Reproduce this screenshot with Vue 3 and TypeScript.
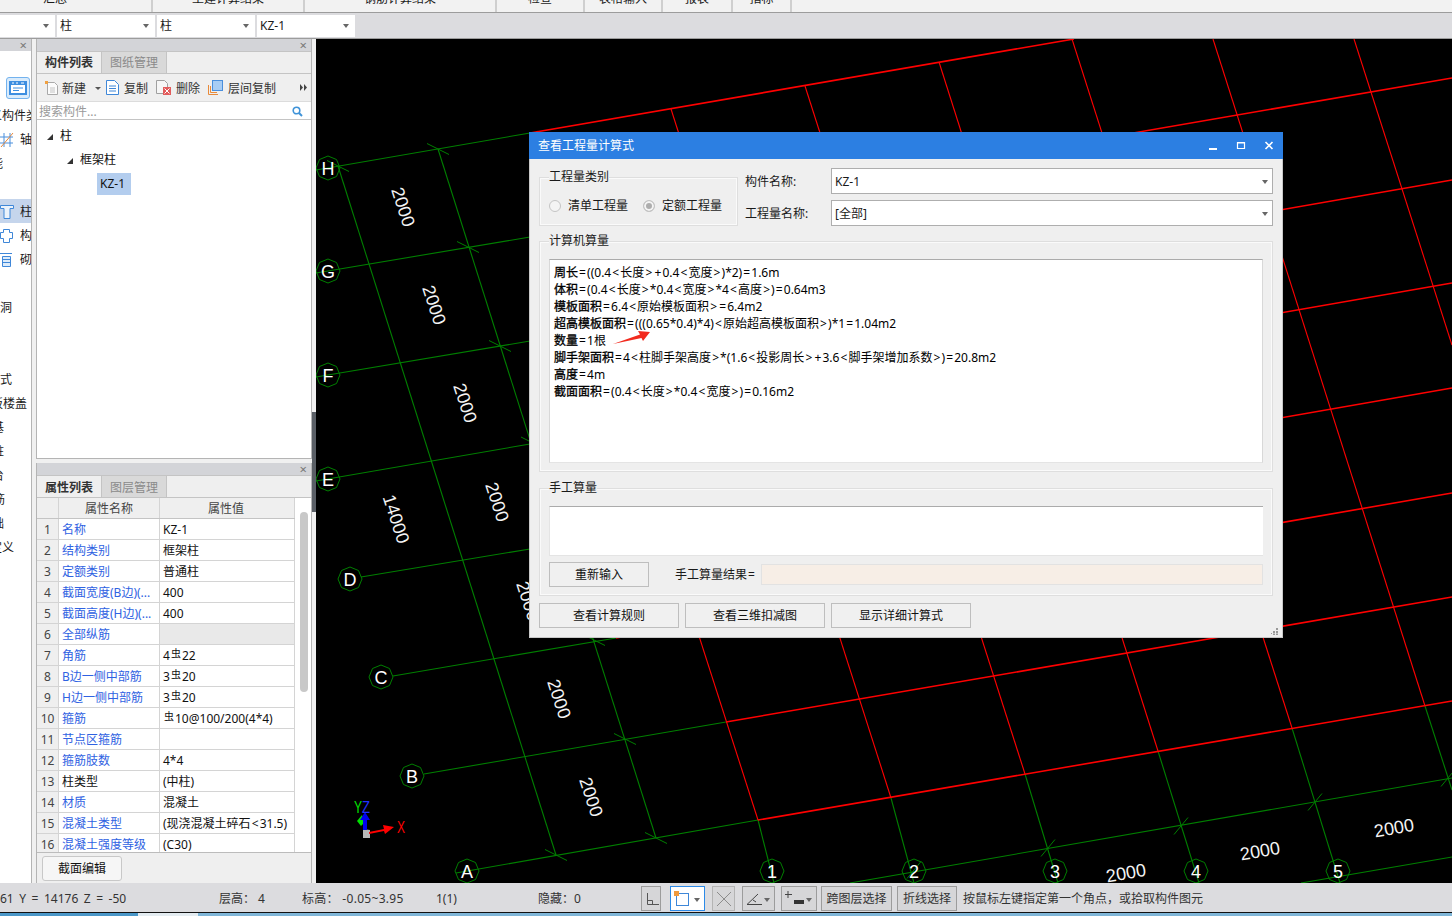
<template>
  <div class="app">
    <div class="menu">
      <div v-for="m in menuTabs" :key="m.label" class="menu__tab" :style="{ width: m.width + 'px' }">
        <span>{{ m.label }}</span>
      </div>
    </div>

    <div class="filters">
      <div class="select select--first"><i class="caret" /></div>
      <div v-for="(s, i) in filters" :key="i" class="select">{{ s }}<i class="caret" /></div>
    </div>

    <div class="main">
      <aside class="nav">
        <div class="nav__title"><span class="close">×</span></div>
        <div class="nav__tools">
          <span class="nav__view">
            <svg width="18" height="14" viewBox="0 0 18 14">
              <rect x="0" y="0" width="18" height="14" fill="#3d8ee0" />
              <rect x="2" y="4" width="14" height="8" fill="#fff" />
              <path d="M3 2h2M7 2h2M12 2h3" stroke="#fff" />
              <path d="M4 7h10M4 9.500h6" stroke="#3d8ee0" />
            </svg>
          </span>
        </div>
        <div
          v-for="(row, i) in navRows"
          :key="i"
          class="nav__row"
          :class="{ 'nav__row--on': row.active }"
        >
          <svg v-if="row.icon === 'grid'" class="nav__icon" width="14" height="16" viewBox="0 0 14 16">
            <path d="M0 5h13M0 11h13M4 1v14M10 1v14" stroke="#4a8fdc" fill="none" />
            <path d="M1 15 13 1" stroke="#e8883a" />
          </svg>
          <svg v-else-if="row.icon === 'col'" class="nav__icon" width="14" height="16" viewBox="0 0 14 16">
            <path d="M0.500 1.500h13v3h-3.500v10h-6v-10h-3.500z" stroke="#3f87d8" fill="#eaf2fb" />
          </svg>
          <svg v-else-if="row.icon === 'ring'" class="nav__icon" width="14" height="16" viewBox="0 0 14 16">
            <path d="M3.500 1.500h6v3h3v6h-3v4h-6v-4h-3v-6h3z" stroke="#3f87d8" fill="#fff" />
          </svg>
          <svg v-else-if="row.icon === 'wall'" class="nav__icon" width="14" height="16" viewBox="0 0 14 16">
            <path d="M0 1.500h12M2.500 4.500h8v10h-8zM2.500 7.500h8M2.500 10.500h8" stroke="#3f87d8" fill="#dcebfa" />
          </svg>
          <span class="nav__text" :style="{ marginLeft: row.offset + 'px' }">{{ row.text }}</span>
        </div>
      </aside>

      <div class="panels">
        <section class="panel panel--list">
          <div class="panel__title"><span class="close">×</span></div>
          <div class="tabs">
            <span class="tab tab--on">构件列表</span>
            <span class="tab">图纸管理</span>
          </div>
          <div class="tools">
            <span class="tool tool--new">
              <svg width="15" height="16" viewBox="0 0 15 16">
                <path d="M3.500 2.500h7l3 3v9h-10z" fill="#fbfbfb" stroke="#a9a9a9" />
                <path d="M6 8h5M6 10h5M6 12h5" stroke="#c4c4c4" />
                <path d="M1 1h3v3H1z" fill="#f0a040" />
              </svg>
              新建<i class="tool__caret" />
            </span>
            <span class="tool">
              <svg width="13" height="15" viewBox="0 0 13 15">
                <path d="M0.500 0.500h8l4 4v10h-12z" fill="#fff" stroke="#3f87d8" />
                <path d="M3 6h7M3 8.500h7M3 11h7" stroke="#3f87d8" />
              </svg>
              复制
            </span>
            <span class="tool">
              <svg width="15" height="15" viewBox="0 0 15 15">
                <path d="M0.500 0.500h8l3 3v10h-11z" fill="#f6f6f6" stroke="#a0a0a0" />
                <rect x="7" y="7" width="8" height="8" fill="#e25b5b" />
                <path d="M8.500 8.500l5 5M13.500 8.500l-5 5" stroke="#fff" />
              </svg>
              删除
            </span>
            <span class="tool">
              <svg width="15" height="15" viewBox="0 0 15 15">
                <path d="M0.500 5v9.500H10" fill="none" stroke="#e88a3a" />
                <path d="M2.500 6v6.500H9" fill="none" stroke="#e88a3a" />
                <rect x="4.500" y="0.500" width="10" height="10" fill="#a8cdf4" stroke="#4a8fdc" />
              </svg>
              层间复制
            </span>
            <svg class="tools__more" width="7" height="7" viewBox="0 0 7 7">
              <path d="M0 0l3 3.500L0 7zM4 0l3 3.500L4 7z" fill="#444" />
            </svg>
          </div>
          <div class="search">
            <span>搜索构件...</span>
            <svg width="11" height="11" viewBox="0 0 11 11">
              <circle cx="4.500" cy="4.500" r="3.300" fill="none" stroke="#3f93d8" stroke-width="1.600" />
              <path d="M7 7l3 3" stroke="#3f93d8" stroke-width="2" />
            </svg>
          </div>
          <div class="tree">
            <div class="tree__row"><i class="tree__arrow" />柱</div>
            <div class="tree__row tree__row--sub"><i class="tree__arrow" />框架柱</div>
            <div class="tree__row tree__row--leaf"><span class="tree__sel">KZ-1</span></div>
          </div>
        </section>

        <section class="panel panel--props">
          <div class="panel__title"><span class="close">×</span></div>
          <div class="tabs tabs--props">
            <span class="tab tab--on">属性列表</span>
            <span class="tab">图层管理</span>
          </div>
          <div class="props">
            <div class="props__scroll"><i /></div>
            <div class="props__table">
              <div class="prow prow--head">
                <span class="pnum" />
                <span class="pname">属性名称</span>
                <span class="pval">属性值</span>
              </div>
              <div v-for="(p, i) in props" :key="p.name" class="prow">
                <span class="pnum">{{ i + 1 }}</span>
                <span class="pname" :class="{ 'pname--plain': p.plain }">{{ p.name }}</span>
                <span class="pval" :class="{ 'pval--group': p.group }">
                  <span v-for="(t, j) in tokens(p.before)" :key="j" :class="{ op: isOp(t) }">{{ t }}</span><span v-if="p.steel" class="steel">虫</span>{{ p.after }}
                </span>
              </div>
            </div>
          </div>
          <div class="props__foot"><button class="edit-btn">截面编辑</button></div>
        </section>
      </div>

      <div class="splitter"><i /></div>

      <div class="canvas">
        <svg class="cad" width="1136" height="844" viewBox="316 39 1136 844">
          <line
            v-for="(l, i) in greenLines"
            :key="'g' + i"
            :x1="l[0]"
            :y1="l[1]"
            :x2="l[2]"
            :y2="l[3]"
            stroke="#007f00"
            stroke-width="1.100"
          />
          <line
            v-for="(l, i) in redAxes"
            :key="'ra' + i"
            :x1="l[0]"
            :y1="l[1]"
            :x2="l[2]"
            :y2="l[3]"
            stroke="#f00"
            stroke-width="1.100"
          />
          <line
            v-for="(l, i) in redBeams"
            :key="'rb' + i"
            :x1="l[0]"
            :y1="l[1]"
            :x2="l[2]"
            :y2="l[3]"
            stroke="#f00"
            stroke-width="1.600"
          />
          <line
            v-for="(t, i) in ticks"
            :key="'t' + i"
            :x1="t[0] - t[2]"
            :y1="t[1] - t[3]"
            :x2="t[0] + t[2]"
            :y2="t[1] + t[3]"
            stroke="#007f00"
          />
          <g v-for="b in bubbles" :key="b.label">
            <polygon :points="octagon(b.x, b.y)" fill="none" stroke="#007f00" />
            <text :x="b.x" :y="b.y + 6.500" class="cad__bubble" text-anchor="middle">{{ b.label }}</text>
          </g>
          <text
            v-for="(d, i) in dims"
            :key="'d' + i"
            class="cad__dim"
            text-anchor="middle"
            :transform="`translate(${d.x} ${d.y}) rotate(${d.r})`"
            y="6"
          >{{ d.text }}</text>

          <polygon points="363,829 370,830 370,838 363,838" fill="#b8b8b8" />
          <polygon points="357,821 362,815 365,822 361,826" fill="#00e000" />
          <path d="M369 832l15-3-1-4 11 2-9 7-1-3-15 3z" fill="#f00" />
          <path d="M363 830v-10h-3l5-8 5 8h-3v10z" fill="#0000f0" />
          <text x="354" y="813" class="cad__axis" fill="#00e000" textLength="8" lengthAdjust="spacingAndGlyphs">Y</text>
          <text x="362" y="813" class="cad__axis" fill="#2030ff" textLength="8" lengthAdjust="spacingAndGlyphs">Z</text>
          <text x="397" y="833" class="cad__axis" fill="#f00" textLength="8" lengthAdjust="spacingAndGlyphs">X</text>
        </svg>

        <div class="dialog">
          <header class="dialog__bar">
            <span>查看工程量计算式</span>
            <div class="dialog__ctrls">
              <svg width="10" height="10" viewBox="0 0 10 10"><path d="M1 8h8" stroke="#fff" stroke-width="2" /></svg>
              <svg width="10" height="10" viewBox="0 0 10 10"><path d="M1.500 1.500h7v6h-7z M1 2h8" stroke="#fff" fill="none" stroke-width="1.200" /></svg>
              <svg width="10" height="10" viewBox="0 0 10 10"><path d="M1.500 1l7 7M8.500 1l-7 7" stroke="#fff" stroke-width="1.600" /></svg>
            </div>
          </header>

          <div class="dialog__body">
            <div class="dialog__top">
              <fieldset class="group group--kind">
                <legend>工程量类别</legend>
                <div class="radios">
                  <label class="radio"><i class="radio__dot" />清单工程量</label>
                  <label class="radio"><i class="radio__dot radio__dot--on" />定额工程量</label>
                </div>
              </fieldset>
              <div class="fields">
                <span class="fields__label">构件名称:</span>
                <div class="combo">KZ-1<i class="caret" /></div>
                <span class="fields__label">工程量名称:</span>
                <div class="combo">[全部]<i class="caret" /></div>
              </div>
            </div>

            <fieldset class="group">
              <legend>计算机算量</legend>
              <div class="formula">
                <div v-for="line in formulas" :key="line" class="formula__line">
                  <span
                    v-for="(t, j) in tokens(line)"
                    :key="j"
                    :class="{ op: isOp(t), formula__head: j === 0 }"
                  >{{ t }}</span>
                </div>
                <svg class="formula__arrow" width="38" height="14" viewBox="0 0 38 14">
                  <path d="M0 13 27 3.500 25 0 37 1 30 10 28.500 7z" fill="#f22a1e" />
                </svg>
              </div>
            </fieldset>

            <fieldset class="group">
              <legend>手工算量</legend>
              <div class="manual" />
              <div class="manual__row">
                <button class="btn btn--small">重新输入</button>
                <span class="manual__label">手工算量结果<span class="op">=</span></span>
                <div class="manual__result" />
              </div>
            </fieldset>

            <div class="dialog__btns">
              <button class="btn">查看计算规则</button>
              <button class="btn">查看三维扣减图</button>
              <button class="btn">显示详细计算式</button>
            </div>
          </div>
          <svg class="dialog__grip" width="8" height="8" viewBox="0 0 8 8">
            <path d="M5 1h2v2H5zM2 4h2v2H2zM5 4h2v2H5zM0 6h1v1H0zM2 6.500h2V8H2zM5 6.500h2V8H5z" fill="#999" />
          </svg>
        </div>
      </div>
    </div>

    <footer class="status">
      <span class="status__item status__item--coord">61 Y = 14176 Z = -50</span>
      <span class="status__item status__item--floor">层高： 4</span>
      <span class="status__item status__item--level">标高： -0.05~3.95</span>
      <span class="status__item status__item--count">1(1)</span>
      <span class="status__item status__item--hide">隐藏：0</span>

      <div class="snap">
        <span class="snap__btn snap__btn--corner">
          <svg width="14" height="14" viewBox="0 0 14 14"><path d="M2.500 1v11.500H14M2.500 8.500h5v4" fill="none" stroke="#555" /></svg>
        </span>
        <span class="snap__btn snap__btn--rect">
          <svg width="17" height="17" viewBox="0 0 17 17">
            <rect x="2.500" y="3.500" width="12" height="12" fill="#fff" stroke="#3f87d8" />
            <rect x="0" y="1" width="5" height="5" fill="#f09a3e" />
          </svg>
          <i class="caret caret--dark" />
        </span>
        <span class="snap__btn snap__btn--off">
          <svg width="16" height="16" viewBox="0 0 16 16"><path d="M1 1l14 14M15 1 1 15" stroke="#8c8c8c" /></svg>
        </span>
        <span class="snap__btn snap__btn--angle">
          <svg width="16" height="14" viewBox="0 0 16 14"><path d="M1 12.500h15M1 12.500 12 2M7 8l3 2" stroke="#444" fill="none" /></svg>
          <i class="caret caret--dark" />
        </span>
        <span class="snap__btn snap__btn--line">
          <svg width="20" height="16" viewBox="0 0 20 16">
            <path d="M3 0v7M0 3.500h7" stroke="#444" />
            <rect x="9" y="9" width="10" height="4" fill="#333" />
          </svg>
          <i class="caret caret--dark" />
        </span>
        <span class="snap__btn snap__btn--text snap__btn--layer">跨图层选择</span>
        <span class="snap__btn snap__btn--text snap__btn--poly">折线选择</span>
      </div>
      <span class="status__hint">按鼠标左键指定第一个角点，或拾取构件图元</span>
    </footer>
    <div class="taskbar" />
  </div>
</template>

<script setup lang="ts">
interface PropRow {
  name: string
  before: string
  after?: string
  steel?: boolean
  plain?: boolean
  group?: boolean
}

interface NavRow {
  text: string
  offset: number
  icon?: string
  active?: boolean
}

type Seg = [number, number, number, number]

const menuTabs = [
  { label: '汇总', width: 153 },
  { label: '土建计算结果', width: 152 },
  { label: '钢筋计算结果', width: 192 },
  { label: '检查', width: 88 },
  { label: '表格输入', width: 78 },
  { label: '报表', width: 70 },
  { label: '指标', width: 59 },
]

const filters = ['柱', '柱', 'KZ-1']

const navRows: NavRow[] = [
  { text: '定义构件类型', offset: -22 },
  { text: '轴线', offset: 6, icon: 'grid' },
  { text: '智能', offset: -21 },
  { text: '', offset: 0 },
  { text: '柱', offset: 6, icon: 'col', active: true },
  { text: '构造柱', offset: 6, icon: 'ring' },
  { text: '砌体柱', offset: 6, icon: 'wall' },
  { text: '', offset: 0 },
  { text: '门窗洞', offset: -24 },
  { text: '', offset: 0 },
  { text: '', offset: 0 },
  { text: '板式', offset: -12 },
  { text: '板楼盖', offset: -9 },
  { text: '基', offset: -8 },
  { text: '桩', offset: -8 },
  { text: '台', offset: -8 },
  { text: '筋', offset: -7 },
  { text: '础', offset: -8 },
  { text: '定义', offset: -10 },
]

const props: PropRow[] = [
  { name: '名称', before: 'KZ-1' },
  { name: '结构类别', before: '框架柱' },
  { name: '定额类别', before: '普通柱' },
  { name: '截面宽度(B边)(...', before: '400' },
  { name: '截面高度(H边)(...', before: '400' },
  { name: '全部纵筋', before: '', group: true },
  { name: '角筋', before: '4', steel: true, after: '22' },
  { name: 'B边一侧中部筋', before: '3', steel: true, after: '20' },
  { name: 'H边一侧中部筋', before: '3', steel: true, after: '20' },
  { name: '箍筋', before: '', steel: true, after: '10@100/200(4*4)' },
  { name: '节点区箍筋', before: '' },
  { name: '箍筋肢数', before: '4*4' },
  { name: '柱类型', before: '(中柱)', plain: true },
  { name: '材质', before: '混凝土' },
  { name: '混凝土类型', before: '(现浇混凝土碎石<31.5)' },
  { name: '混凝土强度等级', before: '(C30)' },
]

const formulas = [
  '周长=((0.4<长度>+0.4<宽度>)*2)=1.6m',
  '体积=(0.4<长度>*0.4<宽度>*4<高度>)=0.64m3',
  '模板面积=6.4<原始模板面积>=6.4m2',
  '超高模板面积=(((0.65*0.4)*4)<原始超高模板面积>)*1=1.04m2',
  '数量=1根',
  '脚手架面积=4<柱脚手架高度>*(1.6<投影周长>+3.6<脚手架增加系数>)=20.8m2',
  '高度=4m',
  '截面面积=(0.4<长度>*0.4<宽度>)=0.16m2',
]

// page coordinates, the svg viewBox starts at the canvas corner
const greenLines: Seg[] = [
  [316, 170, 530, 133],
  [316, 273, 530, 237],
  [316, 377, 530, 341],
  [316, 481, 530, 444],
  [361, 577, 530, 549],
  [393, 676, 616, 638],
  [424, 774, 726, 722],
  [456, 873, 758, 820],
  [850, 883, 1452, 778],
  [1301, 883, 1452, 857],
  [338, 166, 556, 855],
  [438, 149, 656, 838],
  [758, 820, 774, 883],
  [891, 798, 914, 883],
  [1025, 774, 1058, 883],
  [1158, 751, 1199, 883],
  [1292, 728, 1340, 883],
  [1425, 706, 1452, 790],
]

const redAxes: Seg[] = [
  [537, 131, 758, 820],
  [671, 109, 891, 798],
  [805, 86, 1025, 774],
  [939, 62, 1158, 751],
  [1072, 39, 1292, 728],
  [1213, 39, 1425, 706],
  [1354, 39, 1452, 345],
]

const redBeams: Seg[] = [
  [758, 820, 1452, 701],
  [726, 722, 1452, 597],
  [616, 638, 1452, 493],
  [530, 549, 1452, 388],
  [530, 444, 1452, 283],
  [530, 341, 1452, 180],
  [530, 237, 1452, 78],
  [530, 133, 1074, 39],
]

const ticks: Seg[] = [
  [338, 166, 11, 5.500],
  [438, 149, 11, 5.500],
  [468, 247, 11, 5.500],
  [500, 346, 11, 5.500],
  [529, 441, 8, 4],
  [594, 640, 11, 5.500],
  [625, 739, 11, 5.500],
  [656, 838, 11, 5.500],
  [556, 855, 11, 5.500],
  [914, 870, 7, -8.500],
  [1048, 848, 7, -8.500],
  [1181, 826, 7, -8.500],
  [1315, 802, 7, -8.500],
  [1448, 778, 7, -8.500],
]

const bubbles = [
  { label: 'H', x: 328, y: 168 },
  { label: 'G', x: 328, y: 271 },
  { label: 'F', x: 328, y: 375 },
  { label: 'E', x: 328, y: 479 },
  { label: 'D', x: 350, y: 579 },
  { label: 'C', x: 381, y: 677 },
  { label: 'B', x: 412, y: 776 },
  { label: 'A', x: 467, y: 871 },
  { label: '1', x: 772, y: 871 },
  { label: '2', x: 914, y: 871 },
  { label: '3', x: 1055, y: 871 },
  { label: '4', x: 1196, y: 871 },
  { label: '5', x: 1338, y: 871 },
]

const dims = [
  { text: '2000', x: 403, y: 207, r: 72 },
  { text: '2000', x: 434, y: 305, r: 72 },
  { text: '2000', x: 465, y: 403, r: 72 },
  { text: '2000', x: 497, y: 502, r: 72 },
  { text: '14000', x: 396, y: 519, r: 72 },
  { text: '2000', x: 528, y: 601, r: 72 },
  { text: '2000', x: 559, y: 699, r: 72 },
  { text: '2000', x: 591, y: 797, r: 72 },
  { text: '2000', x: 1126, y: 873, r: -10 },
  { text: '2000', x: 1260, y: 851, r: -10 },
  { text: '2000', x: 1394, y: 828, r: -10 },
]

function octagon(cx: number, cy: number): string {
  const r = 12
  const pts: string[] = []
  for (let i = 0; i < 8; i++) {
    const a = (Math.PI / 4) * i
    pts.push(`${(cx + r * Math.cos(a)).toFixed(1)},${(cy + r * Math.sin(a)).toFixed(1)}`)
  }
  return pts.join(' ')
}

// the operators in the formulas are set wider than the rest of the line
function tokens(line: string): string[] {
  return line.split(/([=<>+])/).filter(Boolean)
}

function isOp(t: string): boolean {
  return /^[=<>+]$/.test(t)
}
</script>

<style>
html,
body {
  margin: 0;
  height: 100%;
  overflow: hidden;
}
</style>

<style scoped>
.app {
  width: 1452px;
  height: 916px;
  display: flex;
  flex-direction: column;
  overflow: hidden;
  background: #f0f0f0;
  color: #1a1a1a;
  font: 12px/16px 'Noto Sans', 'Noto Sans CJK SC', sans-serif;
}

.op {
  margin: 0 1.100px;
}

.menu {
  height: 12px;
  flex: none;
  display: flex;
  overflow: hidden;
  background: #f2f2f2;
}

.menu__tab {
  height: 12px;
  flex: none;
  border-right: 2px solid #cfcfcf;
  box-sizing: border-box;
  text-align: center;
  overflow: hidden;
}

.menu__tab span {
  display: block;
  margin-top: -9px;
}

.menu__tab:first-child span {
  margin-right: 41px;
}

.filters {
  height: 27px;
  flex: none;
  display: flex;
  gap: 2px;
  align-items: center;
  box-sizing: border-box;
  background: #dcdcdf;
  border-top: 1px solid #9c9c9c;
  border-bottom: 1px solid #9c9c9c;
}

.select {
  position: relative;
  width: 98px;
  height: 22px;
  box-sizing: border-box;
  padding: 3px 0 0 3px;
  background: #fff;
}

.select--first {
  width: 55px;
}

.caret {
  position: absolute;
  right: 6px;
  top: 9px;
  width: 0;
  height: 0;
  border: 3px solid transparent;
  border-top: 4px solid #666;
  border-bottom: 0;
}

.caret--dark {
  top: 11px;
  right: 4px;
}

.main {
  flex: 1;
  min-height: 0;
  display: flex;
}

.nav {
  width: 32px;
  flex: none;
  box-sizing: border-box;
  overflow: hidden;
  background: #fff;
  border-right: 1px solid #b4b4b4;
}

.nav__title {
  height: 12px;
  background: #d3d4d8;
  position: relative;
}

.nav__tools {
  height: 52px;
  box-sizing: border-box;
  padding: 26px 0 0 6px;
}

.nav__view {
  display: flex;
  align-items: center;
  justify-content: center;
  width: 24px;
  height: 22px;
  box-sizing: border-box;
  border: 1px solid #73b2ee;
  border-radius: 3px;
  background: #d9ebfb;
}

.nav__row {
  height: 24px;
  display: flex;
  align-items: center;
  box-sizing: border-box;
  padding-top: 2px;
  white-space: nowrap;
}

.nav__row--on {
  background: #c5d5ec;
}

.nav__icon {
  flex: none;
}

.panels {
  width: 276px;
  margin-left: 4px;
  flex: none;
  display: flex;
  flex-direction: column;
  gap: 4px;
}

.panel {
  box-sizing: border-box;
  border-left: 1px solid #b4b4b4;
  border-right: 1px solid #b4b4b4;
  background: #efefef;
  display: flex;
  flex-direction: column;
}

.panel--list {
  height: 420px;
  border-bottom: 1px solid #b4b4b4;
}

.panel--props {
  flex: 1;
  min-height: 0;
}

.panel__title {
  position: relative;
  height: 12px;
  flex: none;
  background: #d3d4d8;
}

.close {
  position: absolute;
  right: 4px;
  top: -2px;
  font-size: 13px;
  color: #777;
}

.tabs {
  height: 23px;
  flex: none;
  display: flex;
  box-sizing: border-box;
  border-bottom: 1px solid #c4c4c4;
  border-top: 1px solid #c4c4c4;
}

.tab {
  width: 65px;
  box-sizing: border-box;
  padding-top: 3px;
  text-align: center;
  color: #8a8a8a;
  background: #d9d9d9;
  border-right: 1px solid #c4c4c4;
}

.tabs--props .tab {
  padding-top: 4px;
}

.tab--on {
  color: #333;
  background: #efefef;
  font-weight: 700;
}

.tools {
  height: 27px;
  flex: none;
  display: flex;
  align-items: center;
  position: relative;
  box-sizing: border-box;
  padding: 2px 0 0 7px;
  gap: 8px;
}

.tools .tool svg {
  margin-top: -2px;
}

.tool {
  display: flex;
  align-items: center;
  gap: 5px;
  color: #333;
}

.tool--new {
  gap: 3px;
  margin-right: -3px;
}

.tool__caret {
  width: 0;
  height: 0;
  margin-left: 6px;
  border: 3px solid transparent;
  border-top: 3px solid #555;
  border-bottom: 0;
}

.tools .tools__more {
  position: absolute;
  right: 4px;
  top: 10px;
}

.search {
  height: 19px;
  flex: none;
  display: flex;
  align-items: center;
  justify-content: space-between;
  box-sizing: border-box;
  padding: 2px 8px 0 2px;
  background: #fff;
  color: #9a9a9a;
  border-bottom: 1px solid #c4c4c4;
  border-top: 1px solid #dcdcdc;
}

.tree {
  flex: 1;
  background: #fff;
  padding-top: 4px;
}

.tree__row {
  height: 24px;
  display: flex;
  align-items: center;
  padding-left: 23px;
  color: #111;
}

.tree__row--sub {
  padding-left: 43px;
}

.tree__row--leaf {
  padding-left: 60px;
}

.tree__arrow {
  width: 0;
  height: 0;
  margin: 2px 7px 0 -13px;
  border-left: 6px solid transparent;
  border-bottom: 6px solid #333;
}

.tree__sel {
  height: 22px;
  width: 34px;
  box-sizing: border-box;
  padding: 3px 0 0 3px;
  background: #b3cdee;
}

.props {
  height: 355px;
  flex: none;
  position: relative;
  box-sizing: border-box;
  overflow: hidden;
  background: #fff;
  border-bottom: 1px solid #bcbcbc;
}

.props__scroll {
  position: absolute;
  right: 0;
  top: 0;
  bottom: 0;
  width: 16px;
  background: #fff;
}

.props__scroll i {
  position: absolute;
  left: 5px;
  top: 14px;
  width: 8px;
  height: 180px;
  border-radius: 4px;
  background: #c8c8c8;
}

.props__table {
  width: 258px;
}

.prow {
  height: 21px;
  display: flex;
  box-sizing: border-box;
  border-bottom: 1px solid #d4d4d4;
  line-height: 22px;
}

.prow--head {
  background: #efefef;
  border-bottom: 1px solid #c4c4c4;
  color: #444;
}

.prow--head span {
  text-align: center;
  padding-left: 0;
  color: #444;
}

.prow--head .pval {
  padding-right: 2px;
}

.pnum {
  width: 22px;
  flex: none;
  text-align: center;
  background: #efefef;
  border-right: 1px solid #d4d4d4;
  color: #444;
  box-sizing: border-box;
}

.pname {
  width: 101px;
  flex: none;
  box-sizing: border-box;
  padding-left: 3px;
  color: #2f62e2;
  border-right: 1px solid #d4d4d4;
  white-space: nowrap;
  overflow: hidden;
}

.pname--plain {
  color: #111;
}

.pval {
  flex: 1;
  padding-left: 3px;
  color: #111;
  white-space: nowrap;
  border-right: 1px solid #d4d4d4;
}

.pval--group {
  background: #e9e9e9;
}

.steel {
  font-size: 10px;
  position: relative;
  top: -3px;
  margin: 0 1px;
}

.props__foot {
  flex: 1;
  padding: 3px 0 0 5px;
}

.edit-btn {
  width: 80px;
  height: 25px;
  padding: 0;
  background: #f6f6f6;
  border: 1px solid #c8c8c8;
  border-radius: 3px;
  font: inherit;
  color: #111;
}

.splitter {
  width: 4px;
  flex: none;
  box-sizing: border-box;
  padding-top: 373px;
}

.splitter i {
  display: block;
  height: 100px;
  background: #5a5f66;
}

.canvas {
  position: relative;
  flex: 1;
  min-width: 0;
  background: #000;
  overflow: hidden;
}

.cad {
  display: block;
}

.cad__bubble {
  fill: #fff;
  font: 18px 'Liberation Sans', sans-serif;
}

.cad__dim {
  fill: #f4f4f4;
  font: 18px 'Liberation Sans', sans-serif;
}

.cad__axis {
  font: 16px 'Liberation Sans', sans-serif;
}

.dialog {
  position: absolute;
  left: 213px;
  top: 93px;
  width: 754px;
  height: 506px;
  box-sizing: border-box;
  background: #efefef;
  border: 1px solid #c8c8c8;
  border-top: 0;
}

.dialog__bar {
  height: 27px;
  margin: 0 -1px;
  display: flex;
  align-items: center;
  justify-content: space-between;
  box-sizing: border-box;
  padding-left: 9px;
  background: #2c7fe2;
  color: #fff;
  line-height: 27px;
}

.dialog__ctrls {
  display: flex;
  gap: 18px;
  padding-right: 9px;
}

.dialog__body {
  padding: 9px 9px 0;
  display: flex;
  flex-direction: column;
  gap: 7px;
}

.dialog__top {
  display: flex;
  margin-bottom: -1px;
}

.group {
  margin: 0;
  min-width: 0;
  box-sizing: border-box;
  padding: 0 9px 8px;
  border: 1px solid #dedede;
  box-shadow: inset 0 0 0 1px #fafafa;
}

.group legend {
  padding: 0;
  height: 18px;
  line-height: 18px;
  background: #efefef;
}

.group--kind {
  width: 199px;
  height: 58px;
  flex: none;
  padding: 0;
}

.group--kind legend {
  margin-left: 9px;
}

.radios {
  display: flex;
  padding: 12px 0 0 9px;
  gap: 15px;
}

.radio {
  display: flex;
  align-items: center;
  gap: 7px;
}

.radio__dot {
  width: 12px;
  height: 12px;
  box-sizing: border-box;
  border: 1px solid #c4c4c4;
  border-radius: 50%;
  background: #f4f4f4;
}

.radio__dot--on {
  box-shadow: inset 0 0 0 2px #f4f4f4;
  background: #adadad;
}

.fields {
  flex: 1;
  margin-left: 7px;
  display: grid;
  grid-template-columns: 86px 1fr;
  grid-auto-rows: 26px;
  row-gap: 6px;
  align-items: center;
}

.fields__label {
  padding-top: 2px;
}

.combo {
  position: relative;
  height: 26px;
  box-sizing: border-box;
  padding: 5px 0 0 3px;
  background: #fff;
  border: 1px solid #aeaeae;
}

.combo .caret {
  top: 11px;
  right: 4px;
}

.formula {
  position: relative;
  height: 204px;
  margin-top: 9px;
  box-sizing: border-box;
  padding: 4px 0 0 4px;
  background: #fff;
  border-top: 1px solid #ababab;
  border-left: 1px solid #d8d8d8;
  border-right: 1px solid #d8d8d8;
  border-bottom: 1px solid #e4e4e4;
  color: #000;
}

.formula__line {
  height: 17px;
  line-height: 17px;
  white-space: nowrap;
}

.formula__head {
  -webkit-text-stroke: 0.3px #000;
}

.formula__arrow {
  position: absolute;
  left: 63px;
  top: 71px;
}

.manual {
  height: 50px;
  box-sizing: border-box;
  margin-top: 9px;
  background: #fff;
  border-top: 1px solid #ababab;
  border-left: 1px solid #e4e4e4;
  border-bottom: 1px solid #e4e4e4;
}

.manual__row {
  display: flex;
  align-items: center;
  margin-top: 6px;
}

.manual__label {
  margin-left: 26px;
  width: 86px;
  flex: none;
  white-space: nowrap;
}

.manual__result {
  flex: 1;
  height: 21px;
  box-sizing: border-box;
  background: #f7eee6;
  border: 1px solid #e2e2e2;
}

.btn {
  width: 140px;
  height: 25px;
  padding: 0;
  box-sizing: border-box;
  background: #f0f0f0;
  border: 1px solid #bebebe;
  font: inherit;
  color: #111;
}

.btn--small {
  width: 100px;
}

.dialog__btns {
  display: flex;
  gap: 6px;
}

.dialog__grip {
  position: absolute;
  right: 3px;
  bottom: 2px;
}

.status {
  height: 29px;
  flex: none;
  position: relative;
  display: flex;
  align-items: center;
  box-sizing: border-box;
  padding-top: 2px;
  background: #dcdcdf;
  color: #333;
  white-space: nowrap;
}

.status__item {
  flex: none;
}

.status__item--coord { width: 219px; word-spacing: 2.400px; }
.status__item--floor { width: 83px; }
.status__item--level { width: 134px; letter-spacing: 0.300px; }
.status__item--count { width: 102px; }
.status__item--hide { width: 103px; }

.snap {
  flex: none;
  display: flex;
  gap: 4px;
  height: 25px;
}

.snap__btn {
  position: relative;
  box-sizing: border-box;
  display: flex;
  align-items: center;
  padding-left: 3px;
  height: 25px;
  border: 1px solid #9c9c9c;
  background: #d6d6d8;
}

.snap__btn--corner { width: 20px; margin-right: 5px; }
.snap__btn--rect {
  width: 35px;
  border-color: #2c8ae8;
  background: #fff;
  margin-right: 3px;
}
.snap__btn--off {
  width: 23px;
  border-color: #b4b4b4;
  margin-right: 3px;
}
.snap__btn--angle { width: 33px; margin-right: 2px; }
.snap__btn--line { width: 36px; }
.snap__btn--text {
  justify-content: center;
  padding: 0;
}
.snap__btn--layer { width: 71px; }
.snap__btn--poly { width: 60px; margin-left: 1px; }

.status__hint {
  margin-left: 6px;
}

.taskbar {
  height: 4px;
  flex: none;
  box-sizing: border-box;
  border-top: 1px solid #111;
  background: linear-gradient(90deg, #4a97c8 0 138px, #e4ecf1 138px 198px, #7fb6d8 198px);
}
</style>
